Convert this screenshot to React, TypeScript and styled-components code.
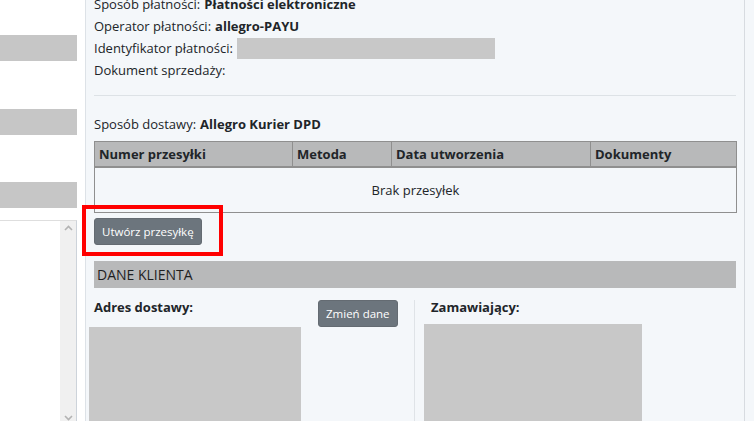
import styled, { createGlobalStyle } from 'styled-components'

const GlobalStyle = createGlobalStyle`
  html, body {
    margin: 0;
    padding: 0;
    background: #ffffff;
  }
  body {
    font-family: 'Open Sans', 'DejaVu Sans', sans-serif;
    font-size: 13px;
    color: #212529;
  }
`

const Page = styled.div`
  display: flex;
  height: 421px;
  overflow: hidden;
  background: #f4f7fa;
`

const Sidebar = styled.aside`
  width: 85px;
  flex-shrink: 0;
  background: #ffffff;
  border-right: 1px solid #dde2e7;
  display: flex;
  flex-direction: column;
`

const SideBar = styled.div<{ $top: number }>`
  width: 77px;
  height: 26px;
  margin-top: ${p => p.$top}px;
  background: #c6c6c6;
`

const ScrollBox = styled.div`
  margin-top: 12px;
  width: 76px;
  flex: 1;
  display: flex;
  justify-content: flex-end;
  border-top: 1px solid #dedede;
  border-right: 1px solid #cdd3da;
  background: #ffffff;
`

const ScrollTrack = styled.div`
  width: 16px;
  background: #f0f0f0;
  display: flex;
  flex-direction: column;
  justify-content: space-between;
  align-items: center;
  padding: 4px 0 0;
`

const Main = styled.main`
  width: 642px;
  flex-shrink: 0;
  border-right: 1px solid #d7dbe0;
  padding: 0 8px;
  box-sizing: content-box;
`

const InfoList = styled.div`
  margin-top: -7px;
`

const InfoLine = styled.div`
  line-height: 22px;
  height: 22px;
  display: flex;
  align-items: center;
  white-space: nowrap;

  b {
    font-weight: 700;
    margin-left: 4px;
  }
`

const Redacted = styled.span<{ $w: number }>`
  display: inline-block;
  width: ${p => p.$w}px;
  height: 21px;
  margin-left: 4px;
  background: #c8c8c8;
`

const Rule = styled.hr`
  border: 0;
  border-top: 1px solid #dde2e6;
  margin: 14px 0 0;
`

const DeliveryLine = styled(InfoLine)`
  margin-top: 17px;
`

const Table = styled.table`
  width: 642px;
  margin-top: 6px;
  table-layout: fixed;
  border-collapse: collapse;
  border: 1px solid #8f8f8f;
  font-size: 13px;
`

const Th = styled.th<{ $w: number }>`
  box-sizing: border-box;
  width: ${p => p.$w}px;
  height: 25px;
  padding: 0 4px;
  text-align: left;
  font-weight: 700;
  background: #b8b9ba;
  border: 1px solid #8f8f8f;
  border-bottom-width: 2px;
  white-space: nowrap;
`

const EmptyCell = styled.td`
  height: 43px;
  padding: 1px 0 0;
  text-align: center;
  vertical-align: middle;
`

const ActionArea = styled.div`
  position: relative;
  margin-top: 5px;
`

const Button = styled.button`
  height: 27px;
  padding: 0 7px;
  border: 1px solid #646b72;
  border-radius: 3px;
  background: #6c757d;
  color: #ffffff;
  font-family: 'Open Sans', 'DejaVu Sans', sans-serif;
  font-size: 11.5px;
  line-height: 25px;
  cursor: pointer;
`

const Highlight = styled.div`
  position: absolute;
  left: -12px;
  top: -13px;
  width: 141px;
  height: 51px;
  border: 4px solid #ff0000;
  box-sizing: border-box;
  pointer-events: none;
`

const SectionBar = styled.div`
  margin-top: 16px;
  height: 27px;
  line-height: 27px;
  padding-left: 3px;
  background: #b8b9ba;
  font-size: 14px;
  color: #1f1f1f;
`

const ClientRow = styled.div`
  display: flex;
  margin: 8px 0 0 -5px;
  height: 200px;
`

const AddressCol = styled.div`
  width: 229px;
  flex-shrink: 0;
`

const ColHeading = styled.div<{ $indent: number }>`
  line-height: 22px;
  font-weight: 700;
  padding-left: ${p => p.$indent}px;
`

const GreyBlock = styled.div<{ $w: number; $gap: number }>`
  width: ${p => p.$w}px;
  height: 120px;
  margin-top: ${p => p.$gap}px;
  background: #c8c8c8;
`

const ButtonCol = styled.div`
  width: 96px;
  flex-shrink: 0;
  padding-top: 4px;
`

const Divider = styled.div`
  width: 1px;
  margin-top: 4px;
  background: #dfe3e7;
`

const CustomerCol = styled.div`
  padding-left: 9px;
`

const RightGutter = styled.div`
  flex: 1;
  background: #f4f7fa;
`

function Chevron({ down }: { down?: boolean }) {
  return (
    <svg width="9" height="6" viewBox="0 0 9 6">
      <path
        d={down ? 'M1 1l3.5 3.5L8 1' : 'M1 5l3.5-3.5L8 5'}
        fill="none"
        stroke="#b3b3b3"
        strokeWidth="1.6"
      />
    </svg>
  )
}

export default function App() {
  return (
    <>
      <GlobalStyle />
      <Page>
        <Sidebar>
          <SideBar $top={35} />
          <SideBar $top={48} />
          <SideBar $top={47} />
          <ScrollBox>
            <ScrollTrack>
              <Chevron />
              <Chevron down />
            </ScrollTrack>
          </ScrollBox>
        </Sidebar>

        <Main>
          <InfoList>
            <InfoLine>
              Sposób płatności:<b>Płatności elektroniczne</b>
            </InfoLine>
            <InfoLine>
              Operator płatności:<b>allegro-PAYU</b>
            </InfoLine>
            <InfoLine>
              Identyfikator płatności:<Redacted $w={258} />
            </InfoLine>
            <InfoLine>Dokument sprzedaży:</InfoLine>
          </InfoList>

          <Rule />

          <DeliveryLine>
            Sposób dostawy:<b>Allegro Kurier DPD</b>
          </DeliveryLine>

          <Table>
            <thead>
              <tr>
                <Th $w={198}>Numer przesyłki</Th>
                <Th $w={99}>Metoda</Th>
                <Th $w={199}>Data utworzenia</Th>
                <Th $w={146}>Dokumenty</Th>
              </tr>
            </thead>
            <tbody>
              <tr>
                <EmptyCell colSpan={4}>Brak przesyłek</EmptyCell>
              </tr>
            </tbody>
          </Table>

          <ActionArea>
            <Button>Utwórz przesyłkę</Button>
            <Highlight />
          </ActionArea>

          <SectionBar>DANE KLIENTA</SectionBar>

          <ClientRow>
            <AddressCol>
              <ColHeading $indent={5}>Adres dostawy:</ColHeading>
              <GreyBlock $w={212} $gap={9} />
            </AddressCol>
            <ButtonCol>
              <Button>Zmień dane</Button>
            </ButtonCol>
            <Divider />
            <CustomerCol>
              <ColHeading $indent={7}>Zamawiający:</ColHeading>
              <GreyBlock $w={218} $gap={6} />
            </CustomerCol>
          </ClientRow>
        </Main>
        <RightGutter />
      </Page>
    </>
  )
}
